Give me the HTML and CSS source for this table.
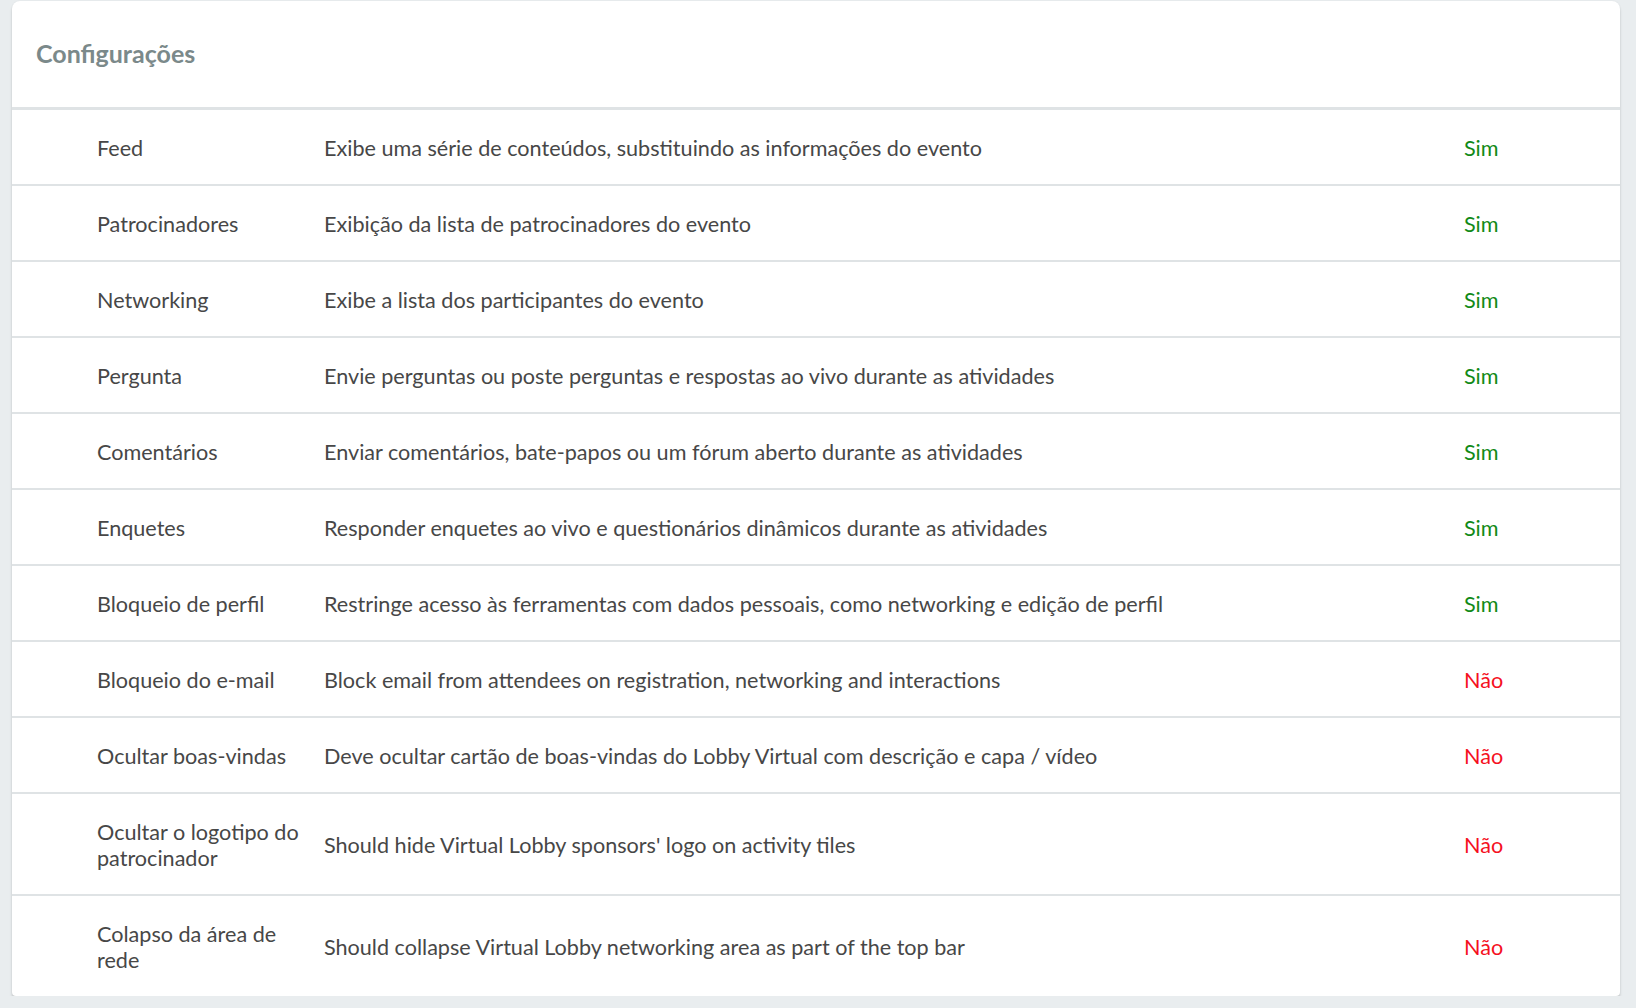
FILE: index.html
```html
<!DOCTYPE html>
<html lang="pt">
<head>
<meta charset="utf-8">
<title>Configurações</title>
<link rel="stylesheet" href="styles.css">
</head>
<body>
<section class="card">
  <header class="card-header">
    <h2 class="card-title">Configurações</h2>
  </header>
  <div class="rows">
    <div class="row"><div class="name">Feed</div><div class="desc">Exibe uma série de conteúdos, substituindo as informações do evento</div><div class="status yes">Sim</div></div>
    <div class="row"><div class="name">Patrocinadores</div><div class="desc">Exibição da lista de patrocinadores do evento</div><div class="status yes">Sim</div></div>
    <div class="row"><div class="name">Networking</div><div class="desc">Exibe a lista dos participantes do evento</div><div class="status yes">Sim</div></div>
    <div class="row"><div class="name">Pergunta</div><div class="desc">Envie perguntas ou poste perguntas e respostas ao vivo durante as atividades</div><div class="status yes">Sim</div></div>
    <div class="row"><div class="name">Comentários</div><div class="desc">Enviar comentários, bate-papos ou um fórum aberto durante as atividades</div><div class="status yes">Sim</div></div>
    <div class="row"><div class="name">Enquetes</div><div class="desc">Responder enquetes ao vivo e questionários dinâmicos durante as atividades</div><div class="status yes">Sim</div></div>
    <div class="row"><div class="name">Bloqueio de perfil</div><div class="desc">Restringe acesso às ferramentas com dados pessoais, como networking e edição de perfil</div><div class="status yes">Sim</div></div>
    <div class="row"><div class="name">Bloqueio do e-mail</div><div class="desc">Block email from attendees on registration, networking and interactions</div><div class="status no">Não</div></div>
    <div class="row"><div class="name">Ocultar boas-vindas</div><div class="desc">Deve ocultar cartão de boas-vindas do Lobby Virtual com descrição e capa / vídeo</div><div class="status no">Não</div></div>
    <div class="row"><div class="name">Ocultar o logotipo do patrocinador</div><div class="desc">Should hide Virtual Lobby sponsors' logo on activity tiles</div><div class="status no">Não</div></div>
    <div class="row"><div class="name">Colapso da área de rede</div><div class="desc">Should collapse Virtual Lobby networking area as part of the top bar</div><div class="status no">Não</div></div>
  </div>
</section>
</body>
</html>
```

FILE: styles.css
```css
html, body {
  margin: 0;
  padding: 0;
  background: #e9edef;
}

body {
  font-family: Lato, "Open Sans", sans-serif;
  color: #474747;
  padding: 1px 16px 0 12px;
}

.card {
  background: #ffffff;
  border-radius: 8px 8px 4px 4px;
  box-shadow: 0 3px 3px rgba(0, 0, 0, 0.16), 0 0 2px rgba(0, 0, 0, 0.06);
  overflow: hidden;
}

.card-header {
  height: 106px;
  display: flex;
  align-items: center;
  padding-left: 24px;
  border-bottom: 3px solid #dfe3e5;
}

.card-title {
  margin: 0 0 2px;
  font-size: 25px;
  font-weight: 700;
  color: #7b898a;
  letter-spacing: 0;
}

.row {
  display: grid;
  grid-template-columns: 227px 1fr 156px;
  align-items: center;
  padding: 25px 0 23px 85px;
  border-bottom: 2px solid #dfe3e5;
  font-size: 21.6px;
  line-height: 26px;
}

.row:last-child {
  border-bottom: none;
}

.name {
  padding-right: 14px;
}

.status.yes {
  color: #128a17;
}

.status.no {
  color: #f5101e;
}
```
